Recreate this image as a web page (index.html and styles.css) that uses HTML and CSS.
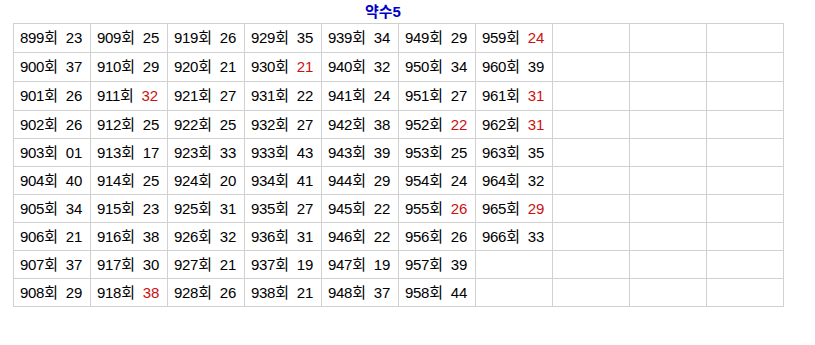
FILE: index.html
```html
<!DOCTYPE html>
<html lang="ko">
<head>
<meta charset="utf-8">
<title>약수5</title>
<link rel="stylesheet" href="styles.css">
</head>
<body>
<div class="title">약수5</div>
<table class="grid">
<tr><td><span class="r">899회</span><span class="n">23</span></td><td><span class="r">909회</span><span class="n">25</span></td><td><span class="r">919회</span><span class="n">26</span></td><td><span class="r">929회</span><span class="n">35</span></td><td><span class="r">939회</span><span class="n">34</span></td><td><span class="r">949회</span><span class="n">29</span></td><td><span class="r">959회</span><span class="n hot">24</span></td><td></td><td></td><td></td></tr>
<tr><td><span class="r">900회</span><span class="n">37</span></td><td><span class="r">910회</span><span class="n">29</span></td><td><span class="r">920회</span><span class="n">21</span></td><td><span class="r">930회</span><span class="n hot">21</span></td><td><span class="r">940회</span><span class="n">32</span></td><td><span class="r">950회</span><span class="n">34</span></td><td><span class="r">960회</span><span class="n">39</span></td><td></td><td></td><td></td></tr>
<tr><td><span class="r">901회</span><span class="n">26</span></td><td><span class="r">911회</span><span class="n hot">32</span></td><td><span class="r">921회</span><span class="n">27</span></td><td><span class="r">931회</span><span class="n">22</span></td><td><span class="r">941회</span><span class="n">24</span></td><td><span class="r">951회</span><span class="n">27</span></td><td><span class="r">961회</span><span class="n hot">31</span></td><td></td><td></td><td></td></tr>
<tr><td><span class="r">902회</span><span class="n">26</span></td><td><span class="r">912회</span><span class="n">25</span></td><td><span class="r">922회</span><span class="n">25</span></td><td><span class="r">932회</span><span class="n">27</span></td><td><span class="r">942회</span><span class="n">38</span></td><td><span class="r">952회</span><span class="n hot">22</span></td><td><span class="r">962회</span><span class="n hot">31</span></td><td></td><td></td><td></td></tr>
<tr><td><span class="r">903회</span><span class="n">01</span></td><td><span class="r">913회</span><span class="n">17</span></td><td><span class="r">923회</span><span class="n">33</span></td><td><span class="r">933회</span><span class="n">43</span></td><td><span class="r">943회</span><span class="n">39</span></td><td><span class="r">953회</span><span class="n">25</span></td><td><span class="r">963회</span><span class="n">35</span></td><td></td><td></td><td></td></tr>
<tr><td><span class="r">904회</span><span class="n">40</span></td><td><span class="r">914회</span><span class="n">25</span></td><td><span class="r">924회</span><span class="n">20</span></td><td><span class="r">934회</span><span class="n">41</span></td><td><span class="r">944회</span><span class="n">29</span></td><td><span class="r">954회</span><span class="n">24</span></td><td><span class="r">964회</span><span class="n">32</span></td><td></td><td></td><td></td></tr>
<tr><td><span class="r">905회</span><span class="n">34</span></td><td><span class="r">915회</span><span class="n">23</span></td><td><span class="r">925회</span><span class="n">31</span></td><td><span class="r">935회</span><span class="n">27</span></td><td><span class="r">945회</span><span class="n">22</span></td><td><span class="r">955회</span><span class="n hot">26</span></td><td><span class="r">965회</span><span class="n hot">29</span></td><td></td><td></td><td></td></tr>
<tr><td><span class="r">906회</span><span class="n">21</span></td><td><span class="r">916회</span><span class="n">38</span></td><td><span class="r">926회</span><span class="n">32</span></td><td><span class="r">936회</span><span class="n">31</span></td><td><span class="r">946회</span><span class="n">22</span></td><td><span class="r">956회</span><span class="n">26</span></td><td><span class="r">966회</span><span class="n">33</span></td><td></td><td></td><td></td></tr>
<tr><td><span class="r">907회</span><span class="n">37</span></td><td><span class="r">917회</span><span class="n">30</span></td><td><span class="r">927회</span><span class="n">21</span></td><td><span class="r">937회</span><span class="n">19</span></td><td><span class="r">947회</span><span class="n">19</span></td><td><span class="r">957회</span><span class="n">39</span></td><td></td><td></td><td></td><td></td></tr>
<tr><td><span class="r">908회</span><span class="n">29</span></td><td><span class="r">918회</span><span class="n hot">38</span></td><td><span class="r">928회</span><span class="n">26</span></td><td><span class="r">938회</span><span class="n">21</span></td><td><span class="r">948회</span><span class="n">37</span></td><td><span class="r">958회</span><span class="n">44</span></td><td></td><td></td><td></td><td></td></tr>
</table>
</body>
</html>
```

FILE: styles.css
```css
html, body {
  margin: 0;
  padding: 0;
  background: #ffffff;
}
body {
  padding: 4px 0 0 13px;
  font-family: "Liberation Sans", "Noto Sans CJK KR", sans-serif;
}
.title {
  width: 770px;
  box-sizing: border-box;
  padding-left: 352px;
  height: 19px;
  line-height: 15px;
  font-size: 15px;
  font-weight: bold;
  color: #0000c8;
}
.grid {
  border-collapse: collapse;
  table-layout: fixed;
  width: 770px;
}
.grid td {
  width: 70px;
  height: 27px;
  padding: 0 0 0 6px;
  border: 1px solid #d0d0d0;
  font-size: 15px;
  line-height: 16px;
  color: #000000;
  white-space: nowrap;
  vertical-align: middle;
  overflow: hidden;
}
.grid tr:nth-child(-n+3) td {
  height: 28px;
}
.r {
  letter-spacing: -0.3px;
}
.n {
  margin-left: 8px;
}
.hot {
  color: #cc1010;
}
```
